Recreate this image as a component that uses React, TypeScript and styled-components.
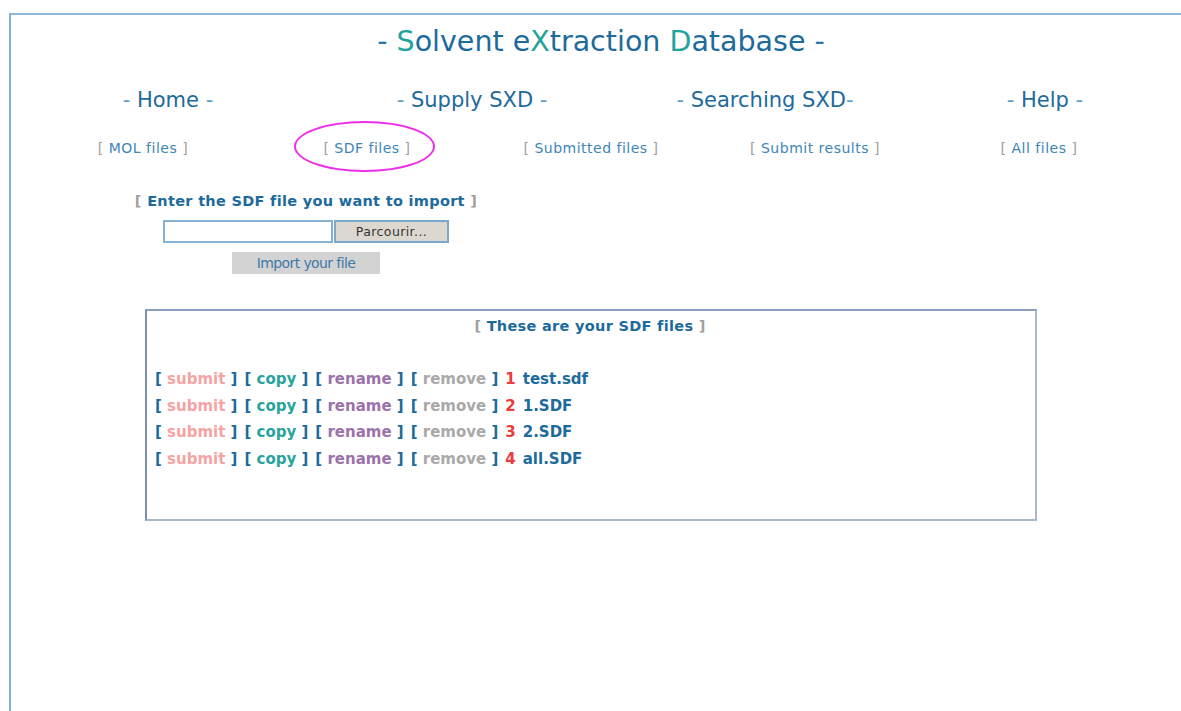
import styled, { createGlobalStyle } from 'styled-components';

const GlobalStyle = createGlobalStyle`
  html, body {
    margin: 0;
    padding: 0;
    background: #ffffff;
    overflow: hidden;
  }
  body {
    font-family: 'DejaVu Sans', Verdana, sans-serif;
  }
`;

const NAV = [
  { label: 'Home', trail: ' -' },
  { label: 'Supply SXD', trail: ' -' },
  { label: 'Searching SXD', trail: '-' },
  { label: 'Help', trail: ' -' },
];

const SUB_LINKS = [
  { label: 'MOL files' },
  { label: 'SDF files', active: true },
  { label: 'Submitted files' },
  { label: 'Submit results' },
  { label: 'All files' },
];

const FILES = ['test.sdf', '1.SDF', '2.SDF', 'all.SDF'];

const ACTIONS: { label: string; tone: string }[] = [
  { label: 'submit', tone: '#f5a3a3' },
  { label: 'copy', tone: '#28a39e' },
  { label: 'rename', tone: '#9b72aa' },
  { label: 'remove', tone: '#a9a9a9' },
];

export default function App() {
  return (
    <>
      <GlobalStyle />
      <Frame>
        <Title>
          <Dash>- </Dash>
          <Accent>S</Accent>olvent e<Accent>X</Accent>traction <Accent>D</Accent>atabase
          <Dash> -</Dash>
        </Title>

        <NavRow>
          {NAV.map((n) => (
            <NavItem key={n.label}>
              <NavDash>- </NavDash>
              {n.label}
              <NavDash>{n.trail}</NavDash>
            </NavItem>
          ))}
        </NavRow>

        <SubRow>
          {SUB_LINKS.map((s) => (
            <SubCell key={s.label}>
              <SubLink active={s.active}>
                <Bracket>[</Bracket> {s.label} <Bracket>]</Bracket>
              </SubLink>
            </SubCell>
          ))}
        </SubRow>

        <ImportForm>
          <FormLabel>
            <Bracket>[</Bracket> Enter the SDF file you want to import <Bracket>]</Bracket>
          </FormLabel>
          <FileRow>
            <FileInput type="text" />
            <BrowseButton type="button">Parcourir...</BrowseButton>
          </FileRow>
          <ImportButton type="button">Import your file</ImportButton>
        </ImportForm>

        <FilesBox>
          <BoxTitle>
            <Bracket>[</Bracket> These are your SDF files <Bracket>]</Bracket>
          </BoxTitle>
          <FileList>
            {FILES.map((f, i) => (
              <FileRowItem key={f}>
                {ACTIONS.map((a) => (
                  <Action key={a.label}>
                    [ <ActionLabel tone={a.tone}>{a.label}</ActionLabel> ]
                  </Action>
                ))}
                <Index>{i + 1}</Index>
                <FileName>{f}</FileName>
              </FileRowItem>
            ))}
          </FileList>
        </FilesBox>
      </Frame>
    </>
  );
}

const Frame = styled.div`
  margin: 13px 0 0 9px;
  min-height: 720px;
  border-top: 2px solid #8ab9d6;
  border-left: 2px solid #7fb2d3;
  overflow: hidden;
  color: #1d6a9c;
`;

const Title = styled.div`
  padding: 11px 0 0 30px;
  width: 1120px;
  text-align: center;
  font-size: 28.5px;
  line-height: 32px;
  color: #1d6a9c;
  white-space: nowrap;
`;

const Dash = styled.span`
  color: #2a78a8;
`;

const Accent = styled.span`
  color: #1fa39c;
`;

const NavRow = styled.div`
  display: grid;
  grid-template-columns: 274px 334px 252px 308px;
  margin: 30px 0 0 20px;
  font-size: 21px;
  line-height: 24px;
`;

const NavItem = styled.div`
  text-align: center;
  white-space: nowrap;
  color: #1d6a9c;
`;

const NavDash = styled.span`
  color: #5f9cc4;
`;

const SubRow = styled.div`
  display: grid;
  grid-template-columns: repeat(5, 224px);
  margin: 27px 0 0 20px;
  font-size: 14px;
  line-height: 18px;
`;

const SubCell = styled.div`
  display: flex;
  justify-content: center;
`;

const SubLink = styled.a<{ active?: boolean }>`
  position: relative;
  color: #3d86b6;
  white-space: nowrap;
  cursor: pointer;
  letter-spacing: 0.5px;

  ${({ active }) =>
    active &&
    `
    &::after {
      content: '';
      position: absolute;
      left: -29px;
      right: -24px;
      top: -18px;
      bottom: -15px;
      border: 2px solid #ee2ee8;
      border-radius: 50%;
    }
  `}
`;

const Bracket = styled.span`
  color: #a0a0a0;
`;

const ImportForm = styled.div`
  display: flex;
  flex-direction: column;
  align-items: center;
  width: 420px;
  margin: 35px 0 0 85px;
`;

const FormLabel = styled.div`
  font-size: 14.5px;
  font-weight: bold;
  line-height: 18px;
  color: #1d6a9c;
  white-space: nowrap;
  letter-spacing: 0.3px;
`;

const FileRow = styled.div`
  display: flex;
  margin-top: 10px;
`;

const FileInput = styled.input`
  box-sizing: border-box;
  width: 170px;
  height: 23px;
  border: 2px solid #86b3d4;
  background: #ffffff;
  padding: 0 4px;
`;

const BrowseButton = styled.button`
  box-sizing: border-box;
  width: 115px;
  height: 23px;
  margin-left: 1px;
  border: 2px solid #7aa9cc;
  background: #dcd8d0;
  color: #333333;
  font-family: 'DejaVu Sans', Verdana, sans-serif;
  font-size: 12.5px;
  letter-spacing: 0.4px;
  padding: 0;
`;

const ImportButton = styled.button`
  box-sizing: border-box;
  width: 148px;
  height: 22px;
  margin: 9px 0 0 0;
  border: none;
  background: #d3d3d3;
  color: #3f79a8;
  font-family: 'DejaVu Sans', Verdana, sans-serif;
  font-size: 14px;
  letter-spacing: -0.6px;
  padding: 0;
`;

const FilesBox = styled.div`
  box-sizing: border-box;
  width: 892px;
  height: 212px;
  margin: 35px 0 0 134px;
  border: 2px solid #a9b7cb;
  border-left-color: #7b8fae;
  border-top-color: #8da0bb;
  padding: 6px 10px 0 8px;
`;

const BoxTitle = styled.div`
  text-align: center;
  font-size: 14.5px;
  font-weight: bold;
  line-height: 18px;
  color: #1d6a9c;
  letter-spacing: 0.3px;
`;

const FileList = styled.div`
  display: flex;
  flex-direction: column;
  gap: 8px;
  margin-top: 35px;
`;

const FileRowItem = styled.div`
  display: flex;
  gap: 7px;
  font-size: 15px;
  font-weight: bold;
  line-height: 18.5px;
  white-space: nowrap;
  color: #1d6a9c;
`;

const Action = styled.span`
  color: #1d6a9c;
`;

const ActionLabel = styled.span<{ tone: string }>`
  color: ${({ tone }) => tone};
`;

const Index = styled.span`
  color: #ee3a3a;
`;

const FileName = styled.span`
  color: #1d6a9c;
`;
